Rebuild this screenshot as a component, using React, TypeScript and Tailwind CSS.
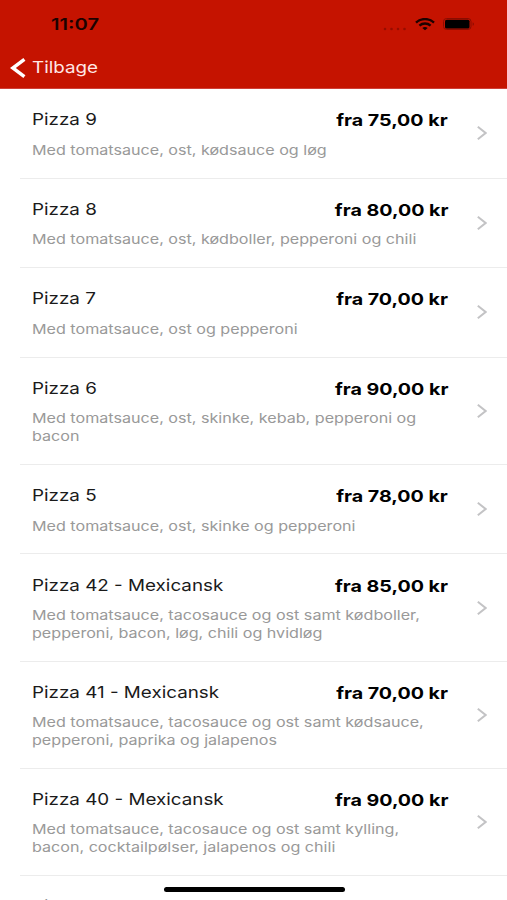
type Pizza = {
  name: string;
  price?: string;
  lines: string[];
};

const pizzas: Pizza[] = [
  { name: "Pizza 9", price: "75,00", lines: ["Med tomatsauce, ost, kødsauce og løg"] },
  { name: "Pizza 8", price: "80,00", lines: ["Med tomatsauce, ost, kødboller, pepperoni og chili"] },
  { name: "Pizza 7", price: "70,00", lines: ["Med tomatsauce, ost og pepperoni"] },
  { name: "Pizza 6", price: "90,00", lines: ["Med tomatsauce, ost, skinke, kebab, pepperoni og", "bacon"] },
  { name: "Pizza 5", price: "78,00", lines: ["Med tomatsauce, ost, skinke og pepperoni"] },
  {
    name: "Pizza 42 - Mexicansk",
    price: "85,00",
    lines: ["Med tomatsauce, tacosauce og ost samt kødboller,", "pepperoni, bacon, løg, chili og hvidløg"],
  },
  {
    name: "Pizza 41 - Mexicansk",
    price: "70,00",
    lines: ["Med tomatsauce, tacosauce og ost samt kødsauce,", "pepperoni, paprika og jalapenos"],
  },
  {
    name: "Pizza 40 - Mexicansk",
    price: "90,00",
    lines: ["Med tomatsauce, tacosauce og ost samt kylling,", "bacon, cocktailpølser, jalapenos og chili"],
  },
  { name: "Pizza", lines: [] },
];

function StatusBar() {
  return (
    <div className="flex h-[48px] items-center justify-between pr-[32px] pl-[51px] text-[#1c0200]">
      <span className="origin-left scale-x-[1.26] text-[16px] font-semibold">11:07</span>
      <div className="flex items-center">
        <svg width="24" height="4" viewBox="0 0 24 4" className="mt-[9px] mr-[8px] fill-[#960d00]">
          <circle cx="2" cy="2" r="1.3" />
          <circle cx="8.5" cy="2" r="1.3" />
          <circle cx="15" cy="2" r="1.3" />
          <circle cx="21.5" cy="2" r="1.3" />
        </svg>
        <svg width="20" height="13" viewBox="0 0 20 13" fill="none" stroke="currentColor" strokeWidth="2.4">
          <path d="M1 4.6C6-.1 14-.1 19 4.6" />
          <path d="M4.4 7.6c3.2-2.8 8-2.8 11.2 0" />
          <path d="M7.3 9.9c1.6-1.3 3.8-1.3 5.4 0L10 12.3z" fill="currentColor" stroke="none" />
        </svg>
        <svg width="32" height="12" viewBox="0 0 32 12" className="ml-[8px]">
          <rect x="0.5" y="0.5" width="27.5" height="11" rx="3" fill="none" stroke="#8a0c00" />
          <rect x="2" y="1.7" width="24.5" height="8.8" rx="1.6" fill="#000" />
          <path d="M29.7 4.2c1.5.4 1.5 3.2 0 3.6z" fill="#870b00" />
        </svg>
      </div>
    </div>
  );
}

function Header() {
  return (
    <header className="h-[89px] shrink-0 border-b border-[#cf4038] bg-[#c51300]">
      <StatusBar />
      <button className="flex h-[39px] items-center pl-[10px] text-white">
        <svg width="16" height="20" viewBox="0 0 16 20" fill="none" stroke="currentColor" strokeWidth="3.5">
          <path d="M14.4 1.4 2.8 10l11.6 8.6" />
        </svg>
        <span className="ml-[6px] origin-left scale-x-[1.14] text-[16.5px] text-[#ffe7e5]">Tilbage</span>
      </button>
    </header>
  );
}

function PizzaRow({ pizza }: { pizza: Pizza }) {
  return (
    <li className="ml-[20px] flex items-center border-b border-[#ececec] pr-[20px] pl-[12px]">
      <div className="flex-1 pt-[20.6px] pb-[18.4px]">
        <div className="flex h-[20px] items-center justify-between whitespace-nowrap">
          <span className="origin-left scale-x-[1.14] text-[16.5px] text-[#1a1a1a]">{pizza.name}</span>
          {pizza.price && (
            <span className="relative top-px origin-right scale-x-[1.19] text-[16.5px] font-bold text-black">
              fra {pizza.price} kr
            </span>
          )}
        </div>
        <div className="mt-[12px] text-[13.5px] leading-[17.6px] text-[#999]">
          {pizza.lines.map((line) => (
            <p key={line} className="w-max origin-left scale-x-[1.194]">
              {line}
            </p>
          ))}
        </div>
      </div>
      <svg
        width="10"
        height="14"
        viewBox="0 0 10 14"
        fill="none"
        stroke="#c3c3c5"
        strokeWidth="2"
        className="ml-[29px] shrink-0"
      >
        <path d="M.8.8 8.6 7 .8 13.2" />
      </svg>
    </li>
  );
}

export default function App() {
  return (
    <div className="relative flex h-[900px] w-[507px] flex-col overflow-hidden bg-white font-['Inter',sans-serif]">
      <Header />
      <ul>
        {pizzas.map((pizza) => (
          <PizzaRow key={pizza.name} pizza={pizza} />
        ))}
      </ul>
      <div className="absolute bottom-[8px] left-[164px] h-[5px] w-[181px] rounded-full bg-black" />
    </div>
  );
}
